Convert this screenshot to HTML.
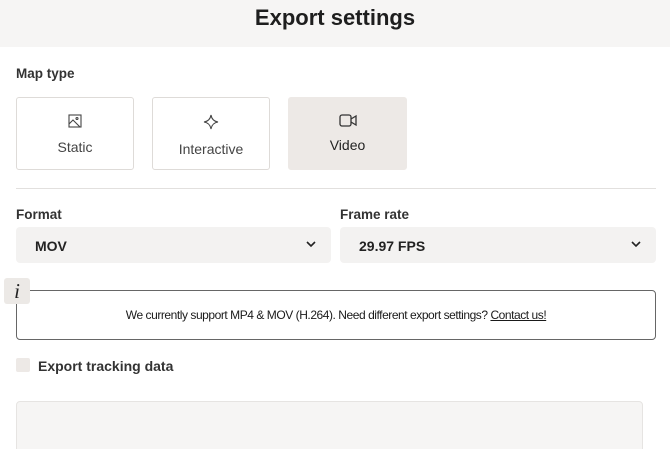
<!DOCTYPE html>
<html><head><style>
*{box-sizing:border-box;margin:0;padding:0}
html,body{width:670px;height:449px;overflow:hidden}
body{background:#fff;font-family:"Liberation Sans",sans-serif;color:#222;position:relative}
.a{position:absolute}
.hdr{left:0;top:0;width:670px;height:47px;background:#f6f5f4}
.title{left:0;width:670px;top:5px;text-align:center;font-size:22px;font-weight:bold;color:#1e1e1e}
.lbl{font-size:13.5px;font-weight:bold;color:#333}
.card{top:97px;height:73px;border:1px solid #dedbd8;border-radius:3px;text-align:center;font-size:14px;color:#444}
.card svg{position:absolute;left:50%;top:16px;transform:translateX(-50%)}
.sel{top:227px;height:36px;background:#f3f2f1;border-radius:4px;font-size:14px;font-weight:bold;padding:11px 0 0 19px;color:#222}
.sel svg{position:absolute;right:15px;top:14px}
</style></head><body>
<div class="a hdr"></div>
<div class="a title">Export settings</div>
<div class="a lbl" style="left:16px;top:66px">Map type</div>
<div class="a card" style="left:16px;width:118px"><svg width="14" height="14" viewBox="0 0 14 14" fill="none" stroke="#444" stroke-width="1.1"><rect x="1" y="1" width="12" height="12"/><circle cx="9" cy="4.5" r="1"/><path d="M1 10l4-4 7 7"/></svg><div style="margin-top:41px">Static</div></div>
<div class="a card" style="left:152px;width:118px"><svg width="16" height="16" viewBox="0 0 16 16" fill="none" stroke="#444" stroke-width="1.1"><path d="M8 1Q9 7 15 8Q9 9 8 15Q7 9 1 8Q7 7 8 1z"/></svg><div style="margin-top:43px">Interactive</div></div>
<div class="a card" style="left:288px;width:119px;background:#ede9e6;border-color:#ede9e6"><svg width="18" height="13" viewBox="0 0 18 13" fill="none" stroke="#333" stroke-width="1.3"><rect x="1" y="1" width="11" height="11" rx="2"/><path d="M12 5l5-3v9l-5-3"/></svg><div style="margin-top:39px;color:#222">Video</div></div>
<div class="a" style="left:16px;top:188px;width:640px;height:1px;background:#e2e0de"></div>
<div class="a lbl" style="left:16px;top:207px">Format</div>
<div class="a lbl" style="left:340px;top:207px">Frame rate</div>
<div class="a sel" style="left:16px;width:315px">MOV<svg width="10" height="7" viewBox="0 0 10 7" fill="none" stroke="#222" stroke-width="1.6"><path d="M1 1l4 4 4-4"/></svg></div>
<div class="a sel" style="left:340px;width:316px">29.97 FPS<svg width="10" height="7" viewBox="0 0 10 7" fill="none" stroke="#222" stroke-width="1.6"><path d="M1 1l4 4 4-4"/></svg></div>
<div class="a" style="left:16px;top:290px;width:640px;height:50px;border:1px solid #666;border-radius:4px;text-align:center;font-size:12px;padding-top:17px;color:#1a1a1a;letter-spacing:-0.45px">We currently support MP4 &amp; MOV (H.264). Need different export settings? <u>Contact us!</u></div>
<div class="a" style="left:4px;top:278px;width:26px;height:26px;background:#ece9e6;border-radius:3px;font-family:'Liberation Serif',serif;font-style:italic;font-size:21px;text-align:center;line-height:26px;color:#222">i</div>
<div class="a" style="left:16px;top:358px;width:14px;height:14px;background:#ede9e6;border-radius:2px"></div>
<div class="a" style="left:38px;top:358px;font-size:14px;font-weight:bold;color:#333">Export tracking data</div>
<div class="a" style="left:16px;top:401px;width:627px;height:60px;background:#f6f5f4;border:1px solid #e6e4e2;border-radius:4px"></div>
</body></html>
